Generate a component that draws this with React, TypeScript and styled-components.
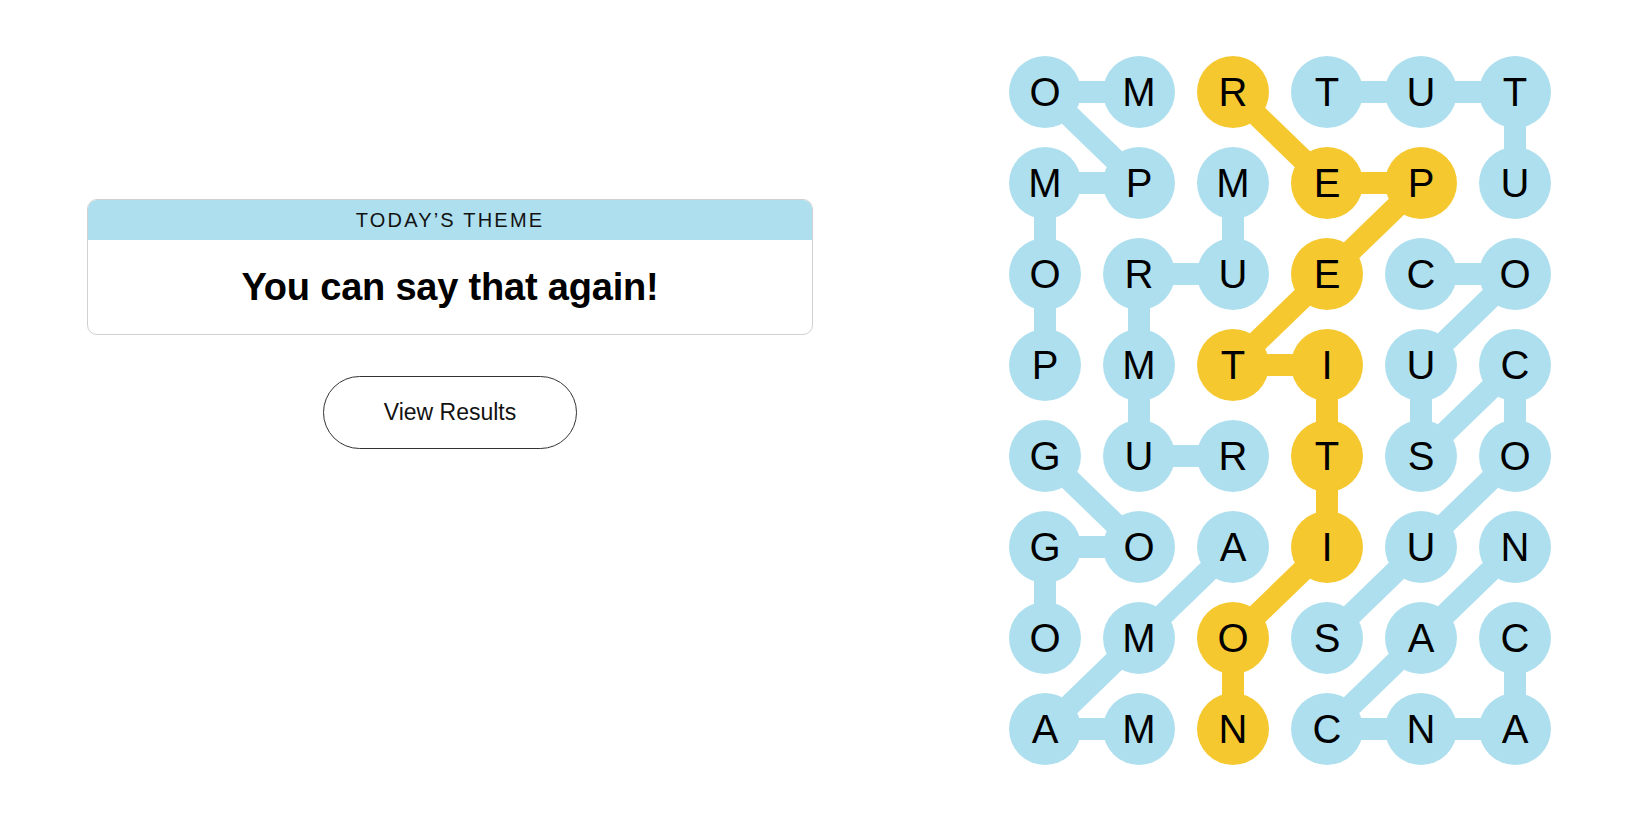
import styled, { createGlobalStyle } from "styled-components";

const GRID = [
  "OMRTUT",
  "MPMEPU",
  "ORUECO",
  "PMTIUC",
  "GURTSO",
  "GOAIUN",
  "OMOSAC",
  "AMNCNA",
];

const BLUE = "#aedfee";
const GOLD = "#f6c830";

type Cell = [number, number];

const WORDS: { cells: Cell[]; spangram?: boolean }[] = [
  { cells: [[3, 0], [2, 0], [1, 0], [1, 1], [0, 0], [0, 1]] },
  { cells: [[1, 2], [2, 2], [2, 1], [3, 1], [4, 1], [4, 2]] },
  { cells: [[0, 3], [0, 4], [0, 5], [1, 5]] },
  { cells: [[2, 4], [2, 5], [3, 4], [4, 4], [3, 5], [4, 5], [5, 4], [6, 3]] },
  { cells: [[6, 5], [7, 5], [7, 4], [7, 3], [6, 4], [5, 5]] },
  { cells: [[4, 0], [5, 1], [5, 0], [6, 0]] },
  { cells: [[7, 1], [7, 0], [6, 1], [5, 2]] },
  {
    spangram: true,
    cells: [[0, 2], [1, 3], [1, 4], [2, 3], [3, 2], [3, 3], [4, 3], [5, 3], [6, 2], [7, 2]],
  },
];

const DOT = 72;
const COL_GAP = 22;
const ROW_GAP = 19;

const center = ([r, c]: Cell) =>
  `${DOT / 2 + c * (DOT + COL_GAP)},${DOT / 2 + r * (DOT + ROW_GAP)}`;

const spanSet = new Set(
  WORDS.filter((w) => w.spangram).flatMap((w) => w.cells.map(([r, c]) => `${r}-${c}`))
);

const App = () => {
  const width = DOT * 6 + COL_GAP * 5;
  const height = DOT * 8 + ROW_GAP * 7;
  return (
    <>
      <GlobalStyle />
      <Page>
        <LeftPanel>
          <ThemeCard>
            <ThemeLabel>Today’s Theme</ThemeLabel>
            <ThemeText>You can say that again!</ThemeText>
          </ThemeCard>
          <ResultsButton>View Results</ResultsButton>
        </LeftPanel>
        <RightPanel>
          <Board>
            <Lines width={width} height={height} viewBox={`0 0 ${width} ${height}`}>
              {WORDS.map((w, i) => (
                <polyline
                  key={i}
                  points={w.cells.map(center).join(" ")}
                  fill="none"
                  stroke={w.spangram ? GOLD : BLUE}
                  strokeWidth={22}
                  strokeLinejoin="round"
                />
              ))}
            </Lines>
            {GRID.map((row, r) =>
              row.split("").map((ch, c) => (
                <Letter key={`${r}-${c}`} $gold={spanSet.has(`${r}-${c}`)}>
                  {ch}
                </Letter>
              ))
            )}
          </Board>
        </RightPanel>
      </Page>
    </>
  );
};
export default App;

const GlobalStyle = createGlobalStyle`
  body {
    margin: 0;
    background: #ffffff;
    font-family: "Liberation Sans", Arial, sans-serif;
    color: #000;
  }
`;

const Page = styled.main`
  display: flex;
  width: 1650px;
  height: 825px;
`;

const LeftPanel = styled.section`
  width: 900px;
  padding-top: 199px;
  display: flex;
  flex-direction: column;
  align-items: center;
  gap: 41px;
`;

const ThemeCard = styled.div`
  width: 726px;
  height: 136px;
  box-sizing: border-box;
  border: 1px solid #d0d0d0;
  border-radius: 10px;
  overflow: hidden;
  display: flex;
  flex-direction: column;
`;

const ThemeLabel = styled.div`
  height: 40px;
  background: ${BLUE};
  display: flex;
  align-items: center;
  justify-content: center;
  font-family: "Liberation Sans", Arial, sans-serif;
  font-size: 20px;
  letter-spacing: 2.2px;
  text-transform: uppercase;
  color: #121212;
`;

const ThemeText = styled.h1`
  flex: 1;
  margin: 0;
  display: flex;
  align-items: center;
  justify-content: center;
  font-family: "Liberation Sans", Arial, sans-serif;
  font-weight: 700;
  font-size: 38px;
  letter-spacing: -0.2px;
  color: #000;
`;

const ResultsButton = styled.button`
  width: 254px;
  height: 73px;
  border: 1px solid #333;
  border-radius: 37px;
  background: #fff;
  font-family: "Liberation Sans", Arial, sans-serif;
  font-size: 23px;
  color: #121212;
  cursor: pointer;
`;

const RightPanel = styled.section`
  padding-left: 109px;
  padding-top: 56px;
`;

const Board = styled.div`
  position: relative;
  display: grid;
  grid-template-columns: repeat(6, ${DOT}px);
  grid-auto-rows: ${DOT}px;
  column-gap: ${COL_GAP}px;
  row-gap: ${ROW_GAP}px;
`;

const Lines = styled.svg`
  position: absolute;
  top: 0;
  left: 0;
  z-index: 0;
`;

const Letter = styled.button<{ $gold: boolean }>`
  position: relative;
  z-index: 1;
  width: ${DOT}px;
  height: ${DOT}px;
  padding: 0;
  border: none;
  border-radius: 50%;
  background: ${(p) => (p.$gold ? GOLD : BLUE)};
  display: flex;
  align-items: center;
  justify-content: center;
  font-family: "Liberation Sans", Arial, sans-serif;
  font-size: 40px;
  color: #000;
  cursor: pointer;
`;
